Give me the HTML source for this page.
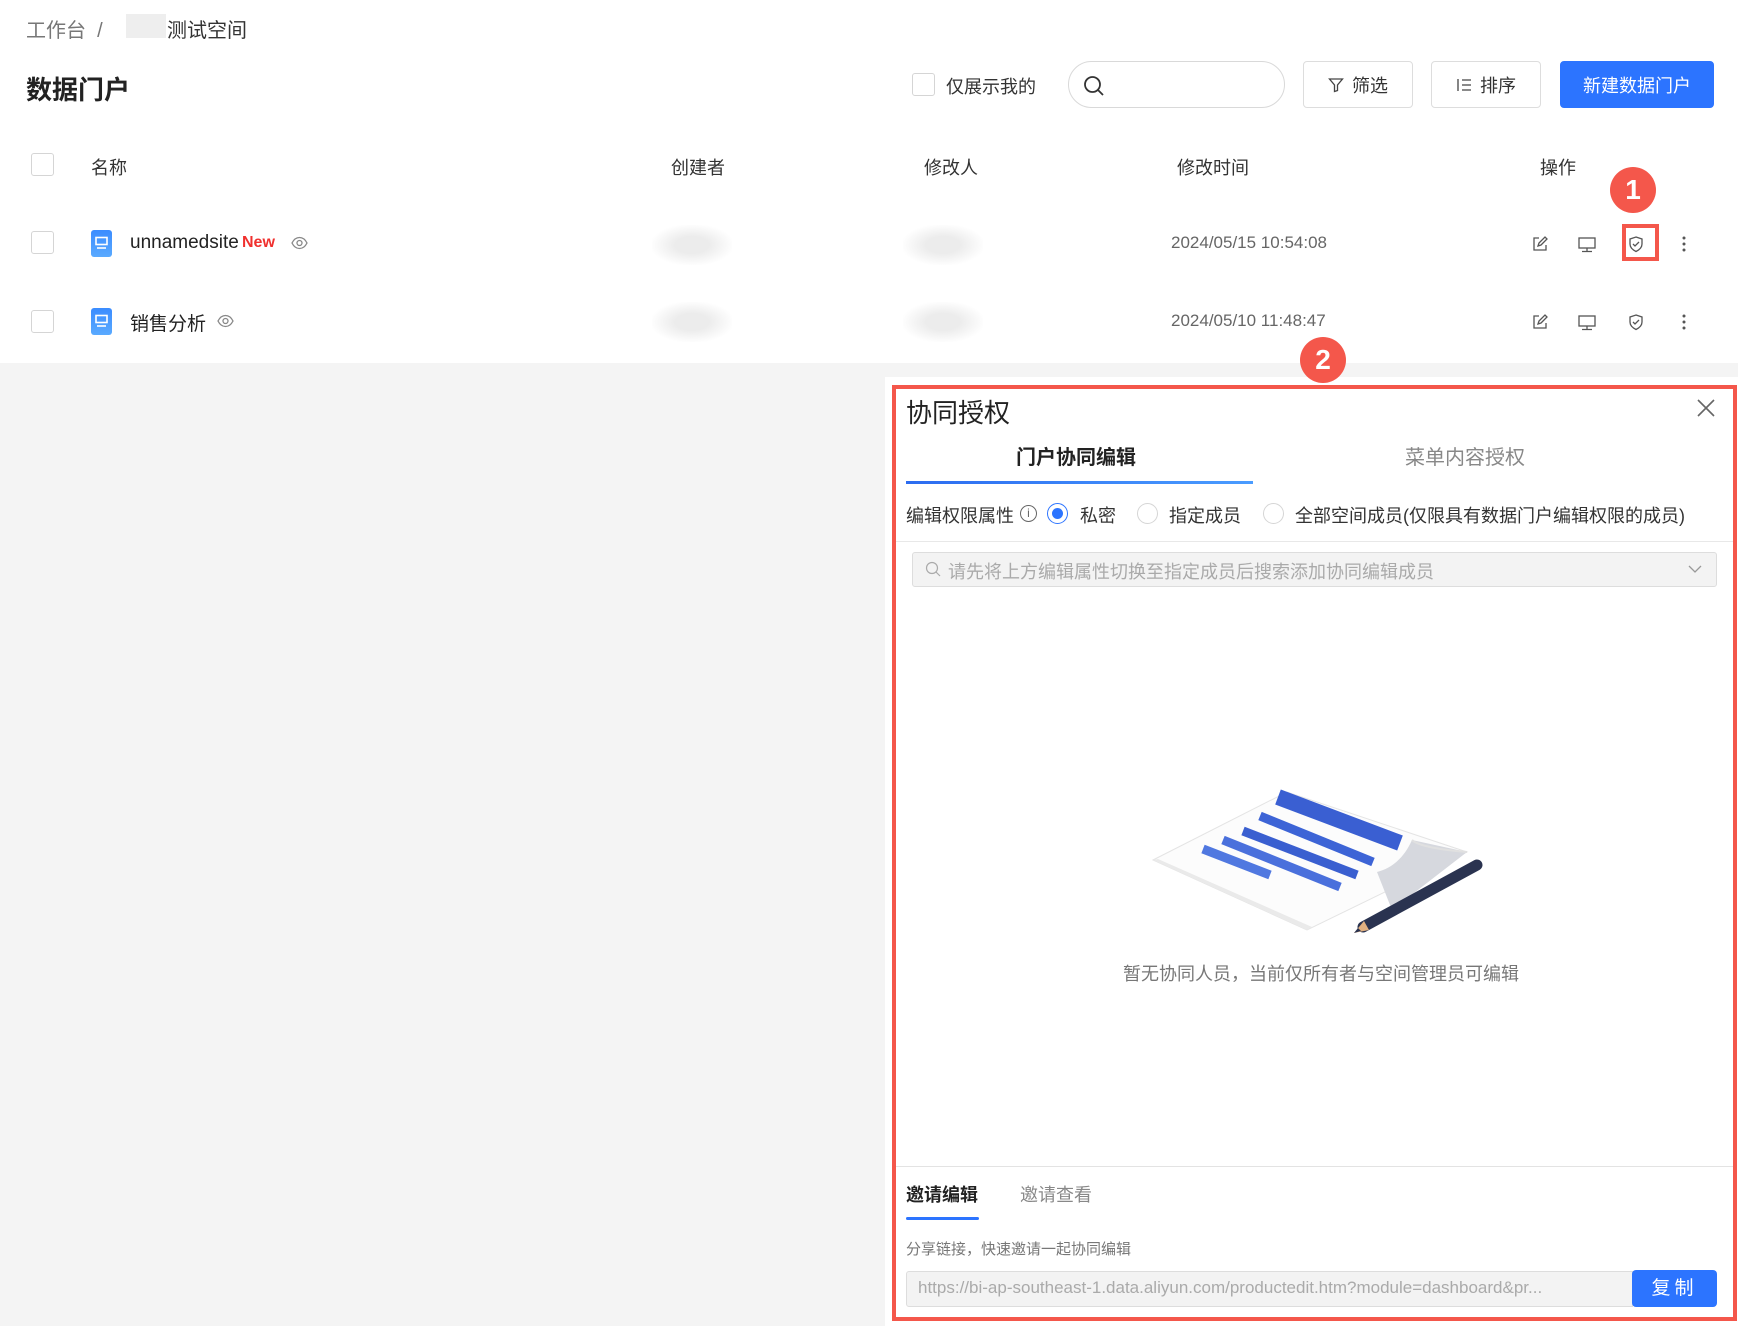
<!DOCTYPE html>
<html><head><meta charset="utf-8">
<style>
*{box-sizing:border-box;margin:0;padding:0}
body{width:1738px;height:1326px;position:relative;overflow:hidden;background:#f4f4f4;font-family:"Liberation Sans","Noto Sans CJK SC",sans-serif;color:#333}
.abs{position:absolute}
.top{left:0;top:0;width:1738px;height:363px;background:#fff}
.cb{position:absolute;width:23px;height:23px;border:1px solid #d5d5d5;border-radius:3px;background:#fff}
.btn{position:absolute;top:61px;height:47px;border:1px solid #ddd;border-radius:4px;background:#fff;font-size:18px;color:#333;display:flex;align-items:center;justify-content:center;gap:8px}
.th{position:absolute;top:154px;font-size:18px;color:#333}
.t{white-space:nowrap}
.blur{position:absolute;width:80px;height:40px;background:radial-gradient(ellipse,#ececec 30%,#fff 75%)}
.ic{position:absolute}
</style></head><body>
<div class="abs top"></div>
<div class="abs t" style="left:26px;top:14px;font-size:20px;color:#777">工作台 &nbsp;/</div>
<div class="abs" style="left:126px;top:14px;width:40px;height:24px;background:#eee"></div>
<div class="abs t" style="left:167px;top:14px;font-size:20px;color:#333">测试空间</div>
<div class="abs t" style="left:26px;top:70px;font-size:26px;font-weight:bold;color:#222">数据门户</div>

<div class="cb" style="left:912px;top:73px"></div>
<div class="abs t" style="left:946px;top:73px;font-size:18px;color:#333">仅展示我的</div>
<div class="abs" style="left:1068px;top:61px;width:217px;height:47px;border:1px solid #d9d9d9;border-radius:24px;background:#fff"></div>
<svg class="ic" style="left:1083px;top:75px" width="22" height="22" viewBox="0 0 22 22"><circle cx="9.5" cy="9.5" r="7.5" fill="none" stroke="#333" stroke-width="1.8"/><path d="M15 15l5 5" stroke="#333" stroke-width="1.8"/></svg>
<div class="btn" style="left:1303px;width:110px"><svg width="16" height="16" viewBox="0 0 16 16"><path d="M1.5 2h13l-5 6v5.5l-3 1V8z" fill="none" stroke="#444" stroke-width="1.3"/></svg>筛选</div>
<div class="btn" style="left:1431px;width:110px"><svg width="16" height="16" viewBox="0 0 16 16"><path d="M2 2v12M6 3h9M6 8h9M6 13h9" stroke="#444" stroke-width="1.3"/></svg>排序</div>
<div class="btn" style="left:1560px;width:154px;background:#2c74ff;border-color:#2c74ff;color:#fff">新建数据门户</div>

<div class="cb" style="left:31px;top:153px"></div>
<div class="th" style="left:91px">名称</div>
<div class="th" style="left:671px">创建者</div>
<div class="th" style="left:924px">修改人</div>
<div class="th" style="left:1177px">修改时间</div>
<div class="th" style="left:1540px">操作</div>

<div class="cb" style="left:31px;top:231px"></div>
<div class="abs" style="left:91px;top:230px;width:21px;height:27px;border-radius:3px;background:linear-gradient(#3b8cff,#5aaaff)"></div>
<svg class="ic" style="left:94px;top:236px" width="15" height="14" viewBox="0 0 15 14"><rect x="2" y="1.5" width="11" height="7" fill="none" stroke="#fff" stroke-width="1.6"/><path d="M3 12h9" stroke="#fff" stroke-width="1.6"/></svg>
<div class="abs t" style="left:130px;top:232px;font-size:19px;color:#222">unnamedsite</div>
<div class="abs t" style="left:242px;top:234px;font-size:16px;color:#f0302e;font-weight:bold">New</div>
<svg class="ic" style="left:291px;top:236px" width="17" height="14" viewBox="0 0 17 14"><path d="M1 7c2-4 5-5.5 7.5-5.5S14 3 16 7c-2 4-5 5.5-7.5 5.5S3 11 1 7z" fill="none" stroke="#888" stroke-width="1.3"/><circle cx="8.5" cy="7" r="2.5" fill="none" stroke="#888" stroke-width="1.3"/></svg>
<div class="blur" style="left:652px;top:225px"></div>
<div class="blur" style="left:903px;top:225px"></div>
<div class="abs t" style="left:1171px;top:233px;font-size:17px;color:#666">2024/05/15 10:54:08</div>

<div class="cb" style="left:31px;top:310px"></div>
<div class="abs" style="left:91px;top:308px;width:21px;height:27px;border-radius:3px;background:linear-gradient(#3b8cff,#5aaaff)"></div>
<svg class="ic" style="left:94px;top:314px" width="15" height="14" viewBox="0 0 15 14"><rect x="2" y="1.5" width="11" height="7" fill="none" stroke="#fff" stroke-width="1.6"/><path d="M3 12h9" stroke="#fff" stroke-width="1.6"/></svg>
<div class="abs t" style="left:130px;top:309px;font-size:19px;color:#222">销售分析</div>
<svg class="ic" style="left:217px;top:314px" width="17" height="14" viewBox="0 0 17 14"><path d="M1 7c2-4 5-5.5 7.5-5.5S14 3 16 7c-2 4-5 5.5-7.5 5.5S3 11 1 7z" fill="none" stroke="#888" stroke-width="1.3"/><circle cx="8.5" cy="7" r="2.5" fill="none" stroke="#888" stroke-width="1.3"/></svg>
<div class="blur" style="left:652px;top:302px"></div>
<div class="blur" style="left:903px;top:302px"></div>
<div class="abs t" style="left:1171px;top:311px;font-size:17px;color:#666">2024/05/10 11:48:47</div>

<svg class="ic" style="left:1530px;top:234px" width="170" height="100" viewBox="0 0 170 100">
<g fill="none" stroke="#555" stroke-width="1.3">
<g><path d="M9 4H4v12h12v-5"/><path d="M8 12l1-3 6-6 2 2-6 6z"/>
<rect x="49" y="4" width="16" height="10"/><path d="M57 14v3M52 17.5h10"/>
<path d="M106 3l6 2v5c0 4-3 6-6 7.5-3-1.5-6-3.5-6-7.5V5z"/><path d="M103 10l2 2 4-4"/></g>
<g transform="translate(0,78)"><path d="M9 4H4v12h12v-5"/><path d="M8 12l1-3 6-6 2 2-6 6z"/>
<rect x="49" y="4" width="16" height="10"/><path d="M57 14v3M52 17.5h10"/>
<path d="M106 3l6 2v5c0 4-3 6-6 7.5-3-1.5-6-3.5-6-7.5V5z"/><path d="M103 10l2 2 4-4"/></g>
</g>
<g fill="#555"><circle cx="154" cy="4" r="1.5"/><circle cx="154" cy="10" r="1.5"/><circle cx="154" cy="16" r="1.5"/>
<circle cx="154" cy="82" r="1.5"/><circle cx="154" cy="88" r="1.5"/><circle cx="154" cy="94" r="1.5"/></g>
</svg>
<div class="abs" style="left:1622px;top:224px;width:37px;height:37px;border:4px solid #f4574b"></div>
<div class="abs" style="left:1610px;top:167px;width:46px;height:46px;border-radius:50%;background:#f4574b;color:#fff;font-size:28px;font-weight:bold;text-align:center;line-height:46px">1</div>

<div class="abs" style="left:885px;top:377px;width:853px;height:949px;background:#fff"></div>
<div class="abs" style="left:892px;top:385px;width:845px;height:936px;border:4px solid #f4574b"></div>
<div class="abs" style="left:1300px;top:337px;width:46px;height:46px;border-radius:50%;background:#f4574b;color:#fff;font-size:28px;font-weight:bold;text-align:center;line-height:46px">2</div>

<div class="abs t" style="left:906px;top:393px;font-size:26px;color:#222">协同授权</div>
<svg class="ic" style="left:1697px;top:399px" width="18" height="18" viewBox="0 0 18 18"><path d="M1 1l16 16M17 1L1 17" stroke="#666" stroke-width="1.6"/></svg>
<div class="abs t" style="left:1016px;top:441px;font-size:20px;color:#222;font-weight:bold">门户协同编辑</div>
<div class="abs t" style="left:1405px;top:441px;font-size:20px;color:#888">菜单内容授权</div>
<div class="abs" style="left:906px;top:481px;width:347px;height:3px;background:linear-gradient(90deg,#2c6cf0,#4a9cff)"></div>

<div class="abs t" style="left:906px;top:502px;font-size:18px;color:#333">编辑权限属性</div>
<div class="abs" style="left:1020px;top:505px;width:17px;height:17px;border:1px solid #666;border-radius:50%;font-size:12px;color:#666;text-align:center;line-height:15px">i</div>
<div class="abs" style="left:1047px;top:503px;width:21px;height:21px;border:1px solid #2c74ff;border-radius:50%"></div>
<div class="abs" style="left:1052px;top:508px;width:11px;height:11px;background:#2c74ff;border-radius:50%"></div>
<div class="abs t" style="left:1080px;top:502px;font-size:18px;color:#333">私密</div>
<div class="abs" style="left:1137px;top:503px;width:21px;height:21px;border:1px solid #d5d5d5;border-radius:50%"></div>
<div class="abs t" style="left:1169px;top:502px;font-size:18px;color:#333">指定成员</div>
<div class="abs" style="left:1263px;top:503px;width:21px;height:21px;border:1px solid #d5d5d5;border-radius:50%"></div>
<div class="abs t" style="left:1295px;top:502px;font-size:18px;color:#333">全部空间成员(仅限具有数据门户编辑权限的成员)</div>
<div class="abs" style="left:896px;top:541px;width:837px;height:1px;background:#e8e8e8"></div>

<div class="abs" style="left:912px;top:552px;width:805px;height:35px;background:#f3f3f3;border:1px solid #ddd;border-radius:3px"></div>
<svg class="ic" style="left:925px;top:561px" width="16" height="16" viewBox="0 0 16 16"><circle cx="7" cy="7" r="5.5" fill="none" stroke="#aaa" stroke-width="1.2"/><path d="M11 11l4 4" stroke="#aaa" stroke-width="1.2"/></svg>
<div class="abs t" style="left:948px;top:558px;font-size:18px;color:#aaa">请先将上方编辑属性切换至指定成员后搜索添加协同编辑成员</div>
<svg class="ic" style="left:1688px;top:564px" width="14" height="10" viewBox="0 0 14 10"><path d="M1 2l6 6 6-6" fill="none" stroke="#999" stroke-width="1.3"/></svg>

<svg class="ic" style="left:1150px;top:780px" width="340" height="160" viewBox="0 0 340 160">
<path d="M3 80L137 12 317 72 157 150z" fill="#fcfcfc" stroke="#e4e4e4"/>
<path d="M3 80L157 150l5-3L8 79z" fill="#eaeaea"/>
<path d="M262 60c-8 18-20 28-35 32l15 38 75-58z" fill="#d6d8de"/>
<path d="M262 60c6 6 30 10 55 12" fill="none" stroke="#e0e0e0" stroke-width="2"/>
<path d="M128 17l122 46" stroke="#3a5fd2" stroke-width="16"/>
<path d="M110 36l113 46" stroke="#3d64d6" stroke-width="9"/>
<path d="M93 51l114 44" stroke="#3a5fd0" stroke-width="9"/>
<path d="M73 60l117 47" stroke="#4a70dc" stroke-width="9"/>
<path d="M53 69l67 26" stroke="#5078e0" stroke-width="9"/>
<path d="M213 147L327 85" stroke="#2a3350" stroke-width="11" stroke-linecap="round"/>
<path d="M214 141l-10 12 15-3z" fill="#e0b080"/>
<path d="M204 153l4-5 3 3z" fill="#2a3350"/>
</svg>
<div class="abs t" style="left:1120px;top:960px;width:402px;text-align:center;font-size:18px;color:#777">暂无协同人员，当前仅所有者与空间管理员可编辑</div>

<div class="abs" style="left:896px;top:1166px;width:837px;height:1px;background:#e3e3e3"></div>
<div class="abs t" style="left:906px;top:1181px;font-size:18px;color:#222;font-weight:bold">邀请编辑</div>
<div class="abs t" style="left:1020px;top:1181px;font-size:18px;color:#888">邀请查看</div>
<div class="abs" style="left:906px;top:1217px;width:73px;height:3px;background:#2c74ff;border-radius:2px"></div>
<div class="abs t" style="left:906px;top:1238px;font-size:15px;color:#777">分享链接，快速邀请一起协同编辑</div>
<div class="abs" style="left:906px;top:1271px;width:727px;height:36px;background:#f3f3f3;border:1px solid #ddd;border-radius:3px 0 0 3px"></div>
<div class="abs t" style="left:918px;top:1278px;font-size:17px;color:#aaa">https://bi-ap-southeast-1.data.aliyun.com/productedit.htm?module=dashboard&amp;pr...</div>
<div class="abs" style="left:1632px;top:1270px;width:85px;height:37px;background:#2c74ff;border-radius:4px;color:#fff;font-size:19px;text-align:center;line-height:37px;letter-spacing:4px">复制</div>
</body></html>
